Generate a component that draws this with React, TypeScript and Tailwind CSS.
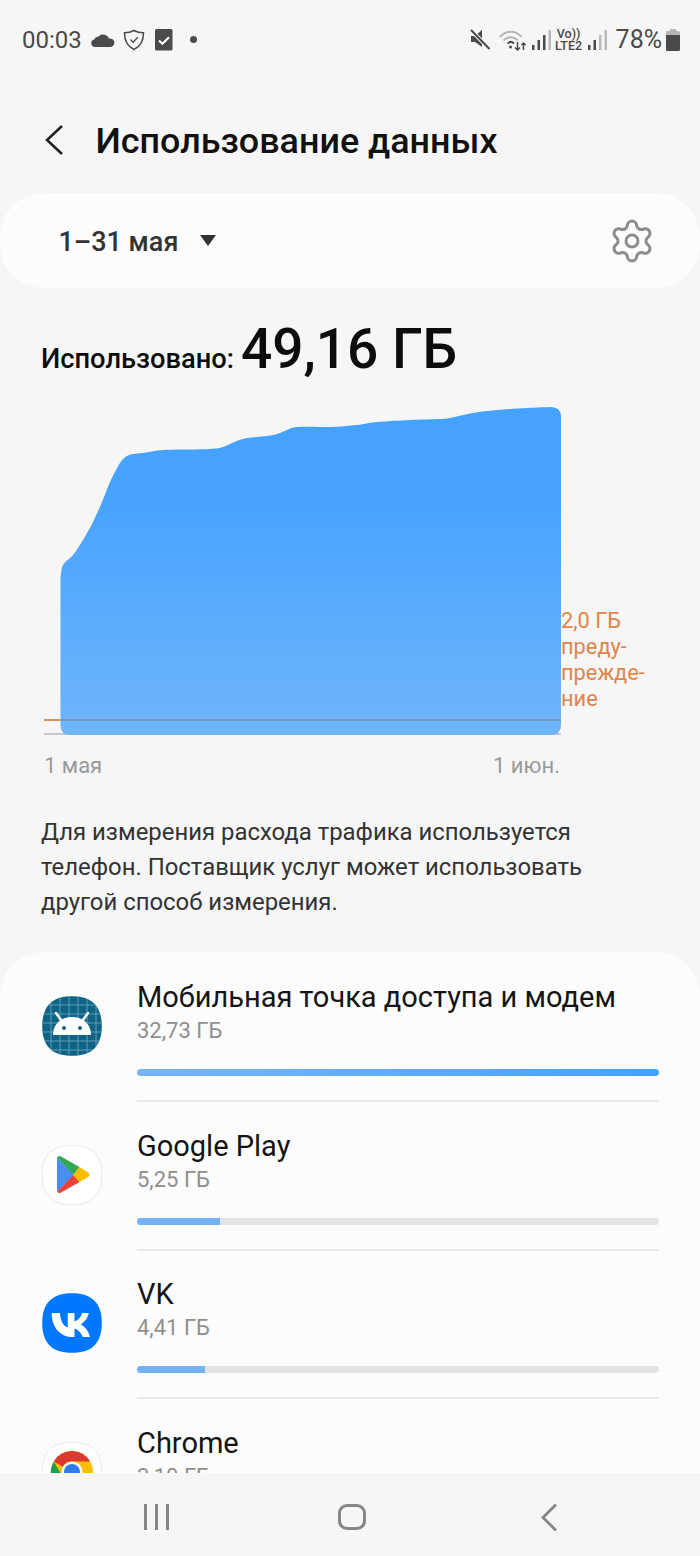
import React from "react";
import { Settings } from "lucide-react";

const top: [number, number][] = [
  [60.5, 578], [63, 565], [73, 555], [83, 540], [93, 522], [102, 502], [110, 482], [120, 463], [127, 456], [133, 454],
  [143, 453], [163, 450], [190, 449.5], [210, 449], [223, 447], [243, 439], [273, 435], [287, 430], [297, 427], [330, 427],
  [357, 425], [377, 422], [410, 420], [440, 419], [450, 418], [473, 413], [497, 410], [527, 408], [551, 407],
];

function smooth(p: [number, number][]) {
  let d = `M${p[0][0]} ${p[0][1]}`;
  for (let i = 0; i < p.length - 1; i++) {
    const a = p[Math.max(i - 1, 0)], b = p[i], c = p[i + 1], e = p[Math.min(i + 2, p.length - 1)];
    d += `C${b[0] + (c[0] - a[0]) / 6} ${b[1] + (c[1] - a[1]) / 6} ${c[0] - (e[0] - b[0]) / 6} ${c[1] - (e[1] - b[1]) / 6} ${c[0]} ${c[1]}`;
  }
  return d;
}
const areaPath = smooth(top) + "Q561 407 561 417L561 725Q561 735 551 735L70 735Q60.5 735 60.5 725Z";

function StatusLeft() {
  return (
    <div className="flex items-center pl-[22px]">
      <span className="text-[24px] leading-none text-[#4a4a4a]">00:03</span>
      <svg className="ml-[9px]" width="24" height="16" viewBox="0 0 24 16"><path d="M4 15a3.800 3.800 0 0 1-.8-7.500 5 5 0 0 1 4.300-3A6.300 6.300 0 0 1 18 6.600 4.300 4.300 0 0 1 20 15Z" fill="#4a4a4a" /></svg>
      <svg className="ml-[8px]" width="22" height="22" viewBox="0 0 22 22" fill="none"><path d="M11 1.500c3 1.700 6 2.300 9.500 2.300 0 8-3 13.700-9.500 16.700C4.500 17.500 1.500 11.800 1.500 3.800 5 3.800 8 3.200 11 1.500Z" stroke="#4a4a4a" strokeWidth="1.500" /><path d="M7.500 10.500l2.700 2.700 4.500-5" stroke="#4a4a4a" strokeWidth="1.300" /></svg>
      <svg className="ml-[10px]" width="18" height="22" viewBox="0 0 18 22" fill="none"><rect width="17.500" height="21.500" rx="1.500" fill="#4a4a4a" /><path d="M4 11.500l3.500 3.200 6.500-6.500" stroke="#fff" strokeWidth="2.200" /></svg>
      <div className="ml-[17px] h-[7px] w-[7px] rounded-full bg-[#4a4a4a]" />
    </div>
  );
}

function Bars({ light }: { light: number }) {
  const hs = [5, 10, 15, 20];
  return (
    <svg width="20" height="21" viewBox="0 0 20 21">
      {hs.map((h, i) => (
        <rect key={i} x={i * 5.500 + 1} y={21 - h} width="2.500" height={h} fill={i >= light ? "#b8b8b8" : "#4a4a4a"} />
      ))}
    </svg>
  );
}

function StatusRight() {
  return (
    <div className="flex items-center pr-[20px]">
      <svg width="21" height="21" viewBox="0 0 21 21" fill="none">
        <path d="M1 7h4l7-6v17l-7-5H1Z" fill="#4a4a4a" /><path d="M1.500 1.500l18 18.500" stroke="#f6f6f6" strokeWidth="4" /><path d="M1 1l18.500 19" stroke="#4a4a4a" strokeWidth="2" />
      </svg>
      <svg className="ml-[8px]" width="28" height="22" viewBox="0 0 28 22" fill="none">
        <path d="M1 8C7 1 17 1 22.500 8" stroke="#b5b5b5" strokeWidth="2" />
        <path d="M4.500 11.500C9 7 14.500 7 19 11.500" stroke="#b5b5b5" strokeWidth="2" />
        <path d="M8.500 14.500C10.500 12.500 13 12.500 15 14.500" stroke="#4a4a4a" strokeWidth="2" />
        <circle cx="11.500" cy="18" r="1.500" fill="#4a4a4a" />
        <path d="M18.500 13v8M16 18.500l2.500 2.500 2.500-2.500" stroke="#4a4a4a" strokeWidth="1.500" />
        <path d="M24.500 21v-7M22.500 16l2-2 2 2" stroke="#4a4a4a" strokeWidth="1.500" />
      </svg>
      <div className="ml-[4px]"><Bars light={3} /></div>
      <div className="ml-[4px] flex w-[28px] flex-col items-center text-[#4a4a4a]">
        <span className="text-[12.500px] font-medium leading-[12px]">Vo))</span>
        <span className="text-[12.500px] font-medium leading-[12px]">LTE2</span>
      </div>
      <div className="ml-[4px]"><Bars light={2} /></div>
      <span className="ml-[9px] text-[25px] leading-none text-[#4a4a4a]">78%</span>
      <svg className="ml-[4px]" width="14" height="22" viewBox="0 0 14 22">
        <path d="M4 0h6v2h2.500A1.500 1.500 0 0 1 14 3.500V6H0V3.500A1.500 1.500 0 0 1 1.500 2H4Z" fill="#b5b5b5" />
        <path d="M0 6h14v14.500A1.500 1.500 0 0 1 12.500 22h-11A1.500 1.500 0 0 1 0 20.500Z" fill="#4a4a4a" />
      </svg>
    </div>
  );
}

function Squircle({ fill, stroke }: { fill: string; stroke?: string }) {
  return <path d="M30 .2C50 .2 59.800 10 59.800 30S50 59.800 30 59.800.2 50 .2 30 10 .2 30 .2Z" fill={fill} stroke={stroke} />;
}

function AndroidIcon() {
  const lines = [9, 18, 27, 36, 45, 54];
  return (
    <svg width="60" height="60" viewBox="0 0 60 60" fill="none">
      <clipPath id="sq"><path d="M30 0C50 0 60 10 60 30S50 60 30 60 0 50 0 30 10 0 30 0Z" /></clipPath>
      <Squircle fill="#0f6486" />
      <g clipPath="url(#sq)" stroke="#5f9cb6" strokeWidth="1">
        {lines.map((v) => <path key={v} d={`M${v} 0V60M0 ${v}H60`} />)}
      </g>
      <path d="M11 39C11 28 19 21 30 21S49 28 49 39Z" fill="#fff" />
      <path d="M19 24l-5-7M41 24l5-7" stroke="#fff" strokeWidth="2.500" strokeLinecap="round" />
      <circle cx="22" cy="32" r="2" fill="#0f6486" />
      <circle cx="38" cy="32" r="2" fill="#0f6486" />
    </svg>
  );
}

function PlayIcon() {
  return (
    <svg width="60" height="60" viewBox="0 0 60 60" fill="none">
      <Squircle fill="#fff" stroke="#e8e8e8" />
      <path d="M15 12.500V46.500L32 30Z" fill="#4a8df6" />
      <path d="M15 12.500C16 11 17.500 10.500 19 11.500L37.500 22 31.500 30Z" fill="#34a853" />
      <path d="M15 46.500C16 48 17.500 48.500 19 47.500L37.500 37 31.500 30Z" fill="#ea4335" />
      <path d="M37.500 22L45.500 27C48 28.500 48 31 45.500 32.500L37.500 37 31 30Z" fill="#fbbc04" />
    </svg>
  );
}

function VkIcon() {
  return (
    <svg width="60" height="60" viewBox="0 0 60 60" fill="none">
      <Squircle fill="#0077ff" />
      <path d="M11.500 20.500h5.200c.3 7 3.400 10.200 5.800 10.800V20.500h5v6.100c2.400-.3 4.900-3 5.700-6.100h5c-.8 4.200-3.900 7.300-6.100 8.600 2.200 1 5.700 3.700 7 9.400h-5.400c-1.100-3.400-3.900-6-6.200-6.300v6.300h-.6c-10.300 0-16.200-7-16.400-18Z" fill="#fff" transform="translate(-4.400 -7.500) scale(1.340)" />
    </svg>
  );
}

function ChromeIcon() {
  return (
    <svg width="60" height="60" viewBox="0 0 60 60" fill="none">
      <Squircle fill="#fff" stroke="#e8e8e8" />
      <circle cx="30" cy="30" r="21" fill="#fbbc04" />
      <path d="M30 9a21 21 0 0 1 18.200 10.500H30a10.500 10.500 0 0 0-9.100 5.200L11.800 19.500A21 21 0 0 1 30 9Z" fill="#db3a2e" />
      <path d="M11.800 19.500l9.100 15.700L30 51A21 21 0 0 1 11.800 19.500Z" fill="#1f9d4d" />
      <circle cx="30" cy="30" r="10.500" fill="#fff" />
      <circle cx="30" cy="30" r="8" fill="#2f7be8" />
    </svg>
  );
}

const rows = [
  { name: "Мобильная точка доступа и модем", size: "32,73 ГБ", pct: 100, icon: <AndroidIcon />, full: true },
  { name: "Google Play", size: "5,25 ГБ", pct: 15.900, icon: <PlayIcon /> },
  { name: "VK", size: "4,41 ГБ", pct: 13, icon: <VkIcon /> },
  { name: "Chrome", size: "3,10 ГБ", pct: 9, icon: <ChromeIcon /> },
];

function Row({ name, size, pct, icon, full, last }: { name: string; size: string; pct: number; icon: React.ReactNode; full?: boolean; last?: boolean }) {
  return (
    <div className="flex h-[148.500px] shrink-0 items-center pl-[42px] pr-[41px]">
      <div className="h-[60px] w-[60px] shrink-0">{icon}</div>
      <div className={`ml-[35px] flex h-[150px] min-w-0 flex-1 flex-col self-start pt-[27px] ${last ? "" : "border-b-2 border-[#e9e9e9]"}`}>
        <div className="text-[29px] leading-[36px] text-[#141414]">{name}</div>
        <div className="text-[22px] leading-[32px] text-[#8f8f8f]">{size}</div>
        <div className="mt-[22px] h-[7px] shrink-0 overflow-hidden rounded-full bg-[#e3e3e3]">
          <div
            className={`h-full ${full ? "bg-gradient-to-r from-[#74b6f8] to-[#45a2ff]" : "bg-[#72b3f6]"}`}
            style={{ width: `${pct}%` }}
          />
        </div>
      </div>
    </div>
  );
}

export default function App() {
  return (
    <div className="flex h-[1556px] w-[700px] flex-col overflow-hidden bg-[#f6f6f6] font-['Roboto',sans-serif]">
      <div className="flex h-[80px] shrink-0 items-center justify-between pb-[1px]">
        <StatusLeft />
        <StatusRight />
      </div>

      <div className="flex h-[113px] shrink-0 items-start pl-[44px] pt-[41px]">
        <svg width="20" height="32" viewBox="0 0 20 32" fill="none" className="mt-[3px]">
          <path d="M18 2L3 16l15 14" stroke="#1f1f1f" strokeWidth="2.500" />
        </svg>
        <h1 className="ml-[31.500px] text-[35.900px] font-medium leading-[40px] text-[#111]">Использование данных</h1>
      </div>

      <div className="flex h-[95px] shrink-0 items-center justify-between rounded-[44px] bg-[#fcfcfc] pl-[58.500px] pr-[44px]">
        <div className="flex items-center pt-[3px]">
          <span className="text-[27px] font-medium leading-none text-[#333]">1–31 мая</span>
          <svg className="ml-[22px] mb-[3px]" width="16" height="11" viewBox="0 0 16 11"><path d="M0 0h16L8 11Z" fill="#333" /></svg>
        </div>
        <Settings size={48} strokeWidth={1.500} color="#8c8c8c" />
      </div>

      <div className="mt-[29px] flex h-[65px] shrink-0 items-baseline pl-[41px] text-[#0c0c0c]">
        <span className="text-[27.300px] font-medium">Использовано:</span>
        <span className="ml-[7px] text-[55px] font-medium leading-[65px]">49,16 ГБ</span>
      </div>

      <div className="mt-[23px] flex h-[345px] shrink-0 pl-[44px]">
        <svg width="518" height="331" viewBox="44 405 518 331" className="shrink-0">
          <defs>
            <linearGradient id="g" x1="0" y1="405" x2="0" y2="735" gradientUnits="userSpaceOnUse">
              <stop offset="0.25" stopColor="#45a2ff" />
              <stop offset="1" stopColor="#70b5fb" />
            </linearGradient>
          </defs>
          <path d="M44 734H561" stroke="#c9c9c9" strokeWidth="2" />
          <path d={areaPath} fill="url(#g)" />
          <path d="M44 720H60" stroke="#e2905a" strokeWidth="2" />
          <path d="M60 720H561" stroke="#7a93ae" strokeWidth="1.500" />
        </svg>
        <div className="ml-[-1px] pt-[203px] text-[21.800px] leading-[26px] text-[#e0854a]">
          <div>2,0 ГБ</div>
          <div>преду-</div>
          <div>прежде-</div>
          <div>ние</div>
        </div>
      </div>

      <div className="mt-[3px] flex w-[560px] shrink-0 justify-between pl-[44px] text-[22px] leading-[26px] text-[#999]">
        <span>1 мая</span>
        <span>1 июн.</span>
      </div>

      <p className="mt-[36px] shrink-0 pl-[41px] text-[23.900px] leading-[35px] text-[#333]">
        Для измерения расхода трафика используется<br />
        телефон. Поставщик услуг может использовать<br />
        другой способ измерения.
      </p>

      <div className="mt-[32px] flex min-h-0 flex-1 flex-col overflow-hidden rounded-t-[44px] bg-[#fcfcfc]">
        {rows.map((r, i) => <Row key={r.name} {...r} last={i === rows.length - 1} />)}
      </div>

      <div className="flex h-[83px] shrink-0 items-center pl-[144px] pt-[5px]">
        <div className="flex gap-[8px]">
          <div className="h-[26px] w-[3px] bg-[#868686]" />
          <div className="h-[26px] w-[3px] bg-[#868686]" />
          <div className="h-[26px] w-[3px] bg-[#868686]" />
        </div>
        <div className="ml-[169px] h-[26px] w-[28px] rounded-[9px] border-[3px] border-[#868686]" />
        <svg className="ml-[175px]" width="16" height="29" viewBox="0 0 16 29" fill="none"><path d="M15 1.500L2 14.500l13 13" stroke="#868686" strokeWidth="2.800" /></svg>
      </div>
    </div>
  );
}
